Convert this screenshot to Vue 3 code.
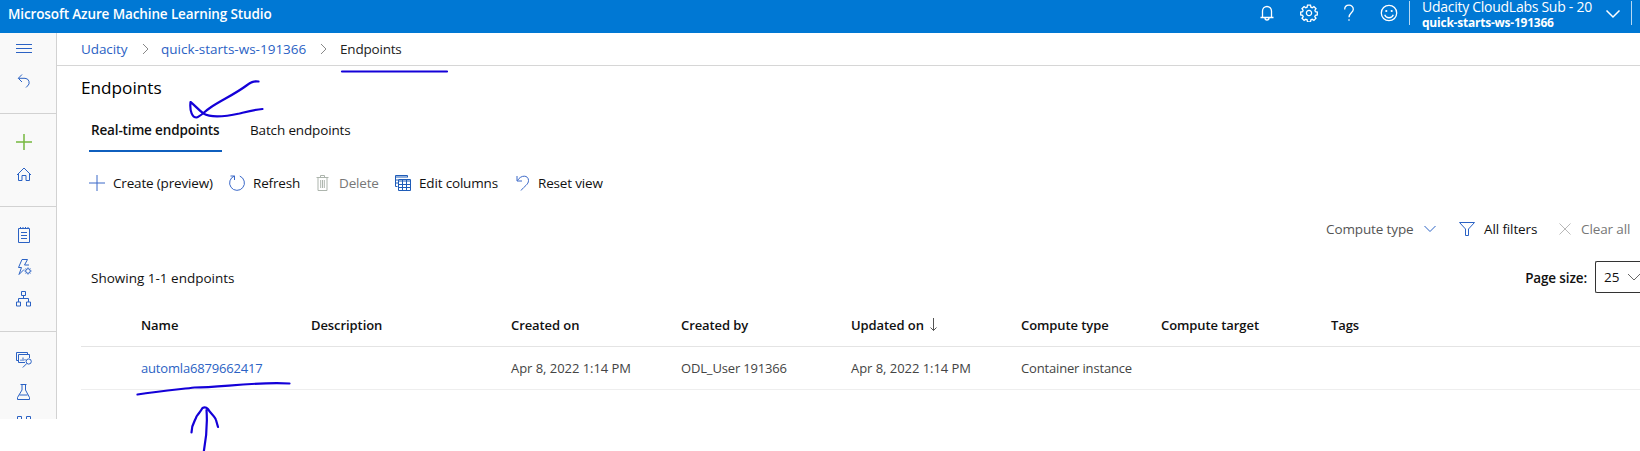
<script setup>
const columns = ['Name', 'Description', 'Created on', 'Created by', 'Updated on', 'Compute type', 'Compute target', 'Tags']
const row = ['automla6879662417', '', 'Apr 8, 2022 1:14 PM', 'ODL_User 191366', 'Apr 8, 2022 1:14 PM', 'Container instance', '', '']
</script>

<template>
  <div class="page">
    <header class="topbar">
      <span class="product">Microsoft Azure Machine Learning Studio</span>
      <div class="actions">
        <svg width="16" height="18" viewBox="0 0 16 18"><path d="M3.500 13V7a4.500 4.500 0 0 1 9 0v6M1.500 13.500h13M6 14a2 2 0 0 0 4 0" /></svg>
        <svg width="18" height="18" viewBox="-9 -9 18 18"><path d="M-1.500-7.800h3l.4 2 1.300.5 1.700-1.100 2.100 2.100-1.100 1.700.5 1.300 1.900.3v3l-1.900.3-.6 1.300 1.200 1.700-2.100 2.100-1.700-1.100-1.300.5-.4 2h-3l-.4-2-1.300-.5-1.700 1.100L-7 5.300l1.200-1.700-.6-1.300-1.900-.3v-3l1.900-.3.5-1.300L-7-4.300-4.900-6.400l1.700 1.100 1.300-.5z" /><circle r="2.600" /></svg>
        <svg width="12" height="18" viewBox="0 0 12 18"><path d="M1.700 5.500C1.700-.2 10.300-.2 10.300 5.200c0 3.300-4.300 3.800-4.300 8M6 15.200v1.600" /></svg>
        <svg width="18" height="18" viewBox="-9 -9 18 18"><circle r="7.700" /><path d="M-4.300 1.800a4.600 4.600 0 0 0 8.600 0" /><circle class="eye" cx="-2.700" cy="-2" r="1.100" /><circle class="eye" cx="2.700" cy="-2" r="1.100" /></svg>
      </div>
      <div class="workspace">
        <div class="names">
          <span class="sub">Udacity CloudLabs Sub - 20</span>
          <span class="ws">quick-starts-ws-191366</span>
        </div>
        <svg width="16" height="10" viewBox="0 0 16 10"><path d="M1.500 1.500 8 8l6.500-6.500" /></svg>
      </div>
    </header>

    <div class="body">
      <nav class="rail">
        <div class="group">
          <a><svg viewBox="0 0 16 16"><path d="M0 3.500h16M0 7.500h16M0 11.500h16" /></svg></a>
          <a><svg viewBox="0 0 16 16"><path d="M6 1.500 2.300 5.300 6 9M2.500 5.300h6.500a4.300 4.300 0 0 1 2.500 7.700l-1.500 1.500" /></svg></a>
        </div>
        <div class="group">
          <a class="create"><svg viewBox="0 0 16 16"><path d="M8 0v16M0 8h16" /></svg></a>
          <a><svg viewBox="0 0 16 16"><path d="M1 9 8 2l7 7M2.500 8v6.500H6V9.500h4v5h3.500V8" /></svg></a>
        </div>
        <div class="group">
          <a><svg viewBox="0 0 16 16"><path d="M2.500 1.500h11v14h-11zM4.500 0v2M7 0v2M9.500 0v2M12 0v2M5 5.500h6M5 8.500h6M5 11.500h6" /></svg></a>
          <a><svg viewBox="0 0 16 16"><path d="M6 .5h5.500L8.500 6h4.500M6 .5 2.500 8.500h3L3 15.500l5-5" /><circle cx="12" cy="12" r="2.300" /><path d="M12 8.500v1M12 14.500v1M8.500 12h1M14.500 12h1M9.600 9.600l.8.8M13.600 13.600l.8.8M14.400 9.600l-.8.8M10.400 13.600l-.8.8" /></svg></a>
          <a><svg viewBox="0 0 16 16"><path d="M5.500.5h4v4h-4zM.5 11h4v4h-4zM10.500 11h4v4h-4zM7.500 4.500v3M2.500 11V7.500h10V11" /></svg></a>
        </div>
        <div class="group">
          <a><svg viewBox="0 0 16 16"><path d="M2.500 8.500h-2v-8h11v2M9 10.500H2.500v-8h11V6M5 9V7.500M7 9V5.500M9 8.500V7" /><circle cx="12.700" cy="9.500" r="2.600" /><path d="m10.800 11.500-4 4" /></svg></a>
          <a><svg viewBox="0 0 16 16"><path d="M4.500.5h6M6 .5v5.500L1.500 13.500v2h12v-2L9.500 6V.5M3.500 11h8" /></svg></a>
          <a><svg viewBox="0 0 16 16"><path d="M1.500.5h4v4h-4zM10.500.5h4v4h-4z" /></svg></a>
        </div>
      </nav>

      <main>
        <div class="crumbs">
          <a class="c1">Udacity</a>
          <svg width="8" height="12" viewBox="0 0 8 12"><path d="m1 1 5 5-5 5" /></svg>
          <a class="c2">quick-starts-ws-191366</a>
          <svg width="8" height="12" viewBox="0 0 8 12"><path d="m1 1 5 5-5 5" /></svg>
          <span class="c3">Endpoints</span>
        </div>
        <h1>Endpoints</h1>
        <div class="tabs">
          <div class="tab active">Real-time endpoints</div>
          <div class="tab">Batch endpoints</div>
        </div>
        <div class="toolbar">
          <div><svg width="16" height="16" viewBox="0 0 16 16"><path d="M8 0v16M0 8h16" /></svg><span>Create (preview)</span></div>
          <div><svg width="16" height="16" viewBox="0 0 16 16"><path d="M5.500 1A7.400 7.400 0 1 0 10.800 1.100M1.500 1h4v4" /></svg><span>Refresh</span></div>
          <div class="off"><svg width="15" height="16" viewBox="0 0 15 16"><path d="M.5 2.500h12M4.500 2.500v-2h4v2M2 2.500v13h9v-13M4.700 5v8M6.500 5v8M8.300 5v8" /></svg><span>Delete</span></div>
          <div><svg class="strong" width="16" height="16" viewBox="0 0 16 16"><path d="M2.500 11.500h-2v-11h12v2M0 2h12M1 5h2M1 8h2M3.500 4.500h12v11h-12zM3.500 6h12M3.500 9.500h12M3.500 12.500h12M7.500 5v10.500M11.500 5v10.500" /></svg><span>Edit columns</span></div>
          <div><svg width="14" height="16" viewBox="0 0 14 16"><path d="M1 1v5h5M1.500 5.500C5-.5 12.500 0 12.500 5.500c0 4-4 5.500-7.500 10" /></svg><span>Reset view</span></div>
        </div>
        <div class="filters">
          <div class="ct"><span>Compute type</span><svg width="12" height="8" viewBox="0 0 12 8"><path d="m.5 1 5.500 5.500L11.500 1" /></svg></div>
          <div class="af"><svg width="16" height="16" viewBox="0 0 16 16"><path d="M.5 1.500h15l-6 6.500v6.500h-3V8z" /></svg><span>All filters</span></div>
          <div class="ca"><svg width="13" height="12" viewBox="0 0 13 12"><path d="m.5.5 11 11M11.500.5l-11 11" /></svg><span>Clear all</span></div>
        </div>
        <div class="summary">
          <span class="count">Showing 1-1 endpoints</span>
          <span class="size">Page size:</span>
          <div class="select"><span>25</span><svg width="14" height="9" viewBox="0 0 14 9"><path d="m1 1 6 6 6-6" /></svg></div>
        </div>
        <div class="table">
          <div class="tr head">
            <div v-for="(c, i) in columns" :key="c"><span>{{ c }}</span><svg v-if="i === 4" width="8" height="14" viewBox="0 0 8 14"><path d="M3.500 0v12.500M.5 9.500l3 3 3-3" /></svg></div>
          </div>
          <div class="tr data">
            <div v-for="(c, i) in row" :key="i" :class="{ link: i === 0, date: i === 2 || i === 4 }"><span>{{ c }}</span></div>
          </div>
        </div>
      </main>
    </div>

    <svg class="ink" viewBox="0 0 1640 451" width="1640" height="451">
      <path d="M342 71.500H447" />
      <path d="M258.500 81.500c-5-1-8 1-12 4-12 9-26 15-36 22-6 4-10 9-14 10-4 0-7-6-6-15.500 4 3 8 8 13 11.500 8 5 22 3 36 0 8-2 15-4 23-4.500" />
      <path d="M137.500 394.500c20-3 40-5 57-7 26 0 60-6 95-4" />
      <path d="M191.500 432.500c0-9 4-12 5-16 2-3 4-5 6-8.500 2-1 4-.5 5.500 1 2 4 7 7 8 11l2 7M206.500 410c1 14 0 28-3 43" />
    </svg>
  </div>
</template>

<style>
body { margin: 0; background: #fff; }
</style>

<style scoped>
.page { position: relative; width: 1640px; height: 451px; overflow: hidden; background: #fff; color: #111; font: 13.5px/20px "Open Sans", "Noto Sans", sans-serif; }
svg { fill: none; stroke: currentColor; stroke-width: 1; flex: none; display: block; }
span, a, .tab { white-space: nowrap; }
.topbar { height: 33px; box-sizing: border-box; background: #0078d4; color: #fff; display: flex; align-items: flex-start; padding-left: 8px; }
.product { font-weight: 600; line-height: 28px; letter-spacing: -0.12px; }
.actions { margin-left: auto; display: flex; gap: 25px; padding-top: 4px; }
.actions svg { stroke-width: 1.300; }
.eye { fill: #fff; stroke: none; }
.workspace { display: flex; width: 223px; height: 24px; margin: 1px 8px 0 11px; border-left: 1px solid #b5d8f4; border-right: 1px solid #b5d8f4; box-sizing: border-box; padding-left: 12px; }
.workspace svg { margin: 8px 0 0 12px; stroke-width: 1.500; }
.names { width: 171px; display: flex; flex-direction: column; margin-top: -2px; }
.sub { font-size: 14px; line-height: 16px; letter-spacing: -0.27px; }
.ws { font-size: 12px; font-weight: 700; line-height: 16px; letter-spacing: -0.23px; }
.body { display: flex; height: 386px; }
.rail { width: 56px; border-right: 1px solid #d2d2d2; background: #f9f9f9; height: 385.500px; overflow: hidden; color: #2b62c4; flex: none; }
.group { padding: 12px 0 16px; border-bottom: 1px solid #d2d2d2; }
.group:first-child { padding-top: 0; }
.group a { height: 32px; display: flex; align-items: center; padding-left: 16px; }
.group svg { width: 16px; height: 16px; }
.group .create { color: #76b83f; }
.create svg { stroke-width: 1.500; }
main { flex: 1; min-width: 0; }
.crumbs { height: 32px; border-bottom: 1px solid #d6d6d6; padding-left: 24px; display: flex; align-items: center; color: #888; }
.crumbs a { color: #2b62c4; }
.crumbs .c1 { width: 61px; letter-spacing: -0.1px; }
.crumbs .c2 { width: 159px; margin-left: 11px; }
.crumbs .c3 { color: #222; margin-left: 12px; letter-spacing: -0.2px; }
h1 { margin: 9px 0 0 24px; font-size: 17.2px; line-height: 26px; font-weight: 500; color: #000; }
.tabs { display: flex; margin: 18px 0 0 32px; height: 33px; gap: 20px; letter-spacing: -0.15px; }
.tab { padding: 0 8px 0 2px; line-height: 22px; }
.active { width: 133px; box-sizing: border-box; padding: 0 2px; font-weight: 600; border-bottom: 2px solid #0f5fbe; margin-right: 6px; }
.toolbar { display: grid; grid-template-columns: 140px 87px 79px 121px 100px; margin: 21px 0 0 32px; height: 20px; letter-spacing: -0.17px; }
.toolbar div { display: flex; align-items: center; }
.toolbar svg { color: #3a68c8; margin-right: 8px; }
.toolbar .strong { color: #1f5cb8; }
.toolbar .off { color: #777; }
.toolbar .off svg { color: #adb5ad; }
.filters { display: flex; justify-content: flex-end; margin-top: 26px; height: 20px; padding-right: 9px; letter-spacing: -0.12px; }
.filters div { display: flex; align-items: center; }
.filters svg { margin-right: 9px; color: #2b62c4; }
.filters .ct { width: 133px; color: #555; }
.filters .ct svg { margin: 0 0 0 10px; }
.filters .af { width: 100px; }
.filters .ca { width: 72px; color: #777; }
.filters .ca svg { color: #b8b8b8; }
.summary { display: flex; align-items: center; height: 32px; margin-top: 22px; padding-left: 34px; }
.count, .size { padding-top: 2px; }
.size { margin-left: auto; font-weight: 600; letter-spacing: -0.13px; }
.select { width: 45px; height: 32px; box-sizing: border-box; border: 1px solid #333; border-right: 0; border-radius: 2px 0 0 2px; display: flex; align-items: center; padding-left: 8px; margin-left: 8px; overflow: hidden; }
.select svg { margin-left: 8px; color: #666; }
.table { margin-left: 24px; font-size: 13px; }
.tr { display: grid; grid-template-columns: 170px 200px 170px 170px 170px 140px 170px auto; padding-left: 60px; border-bottom: 1px solid #e4e4e4; height: 42px; align-items: center; letter-spacing: -0.16px; }
.tr div { display: flex; align-items: center; }
.head { height: 43px; margin-top: 10px; font-weight: 600; letter-spacing: -0.08px; }
.head span { padding-top: 1px; }
.head svg { margin-left: 6px; color: #555; }
.data { color: #444; border-color: #eee; }
.data .link { color: #2b62c4; letter-spacing: -0.18px; }
.data .date { letter-spacing: -0.04px; }
.ink { position: absolute; left: 0; top: 0; stroke: #1400d8; stroke-width: 2.200; stroke-linecap: round; stroke-linejoin: round; }
</style>
